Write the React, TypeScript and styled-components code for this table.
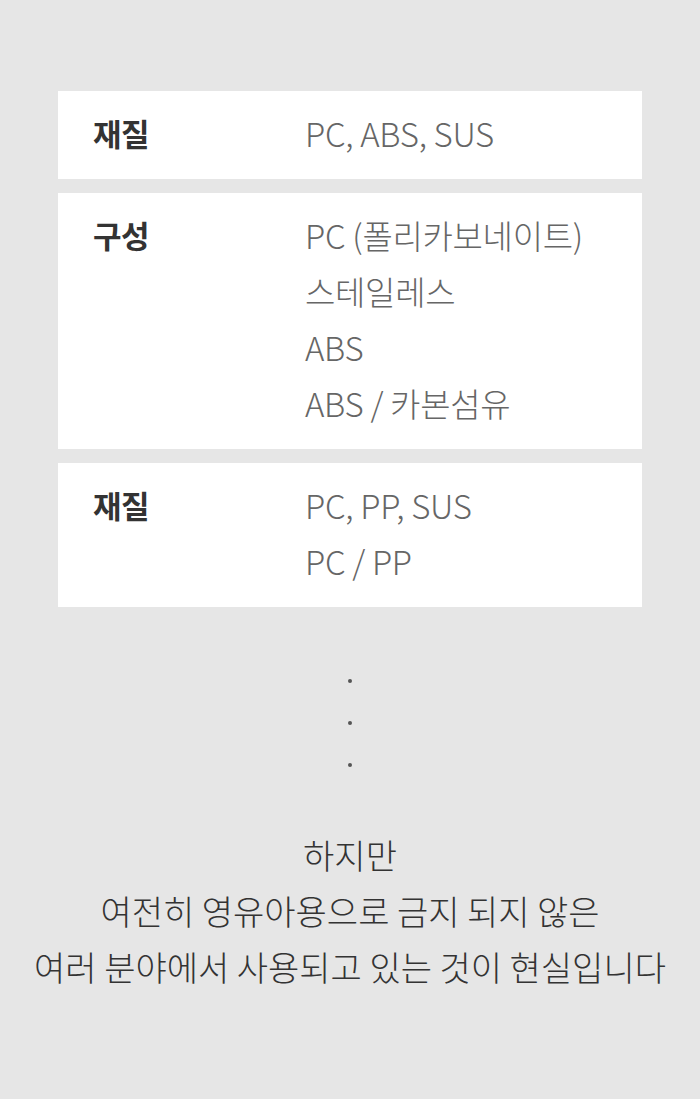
import styled, { createGlobalStyle } from 'styled-components';

const GlobalStyle = createGlobalStyle`
  html, body {
    margin: 0;
    padding: 0;
    background: #e6e6e6;
  }
  body {
    font-family: "Noto Sans CJK KR", "Noto Sans", sans-serif;
  }
`;

type SpecRow = {
  label: string;
  values: string[];
};

const specs: SpecRow[] = [
  { label: '재질', values: ['PC, ABS, SUS'] },
  { label: '구성', values: ['PC (폴리카보네이트)', '스테일레스', 'ABS', 'ABS / 카본섬유'] },
  { label: '재질', values: ['PC, PP, SUS', 'PC / PP'] },
];

const App = () => {
  return (
    <Page>
      <GlobalStyle />
      <SpecList>
        {specs.map((row, i) => (
          <SpecCard key={i}>
            <Label>{row.label}</Label>
            <Values>
              {row.values.map((v) => (
                <Value key={v}>{v}</Value>
              ))}
            </Values>
          </SpecCard>
        ))}
      </SpecList>

      <Dots>
        <Dot />
        <Dot />
        <Dot />
      </Dots>

      <Closing>
        하지만
        <br />
        여전히 영유아용으로 금지 되지 않은
        <br />
        여러 분야에서 사용되고 있는 것이 현실입니다
      </Closing>
    </Page>
  );
};

const Page = styled.div`
  width: 700px;
  height: 1099px;
  box-sizing: border-box;
  padding: 91px 58px 0;
  display: flex;
  flex-direction: column;
  align-items: center;
  background: #e6e6e6;
`;

const SpecList = styled.div`
  width: 100%;
  display: flex;
  flex-direction: column;
  gap: 14px;
`;

const SpecCard = styled.div`
  display: grid;
  grid-template-columns: 212px 1fr;
  padding: 14px 35px 18px;
  background: #ffffff;
`;

const Label = styled.span`
  font-size: 31px;
  font-weight: 700;
  line-height: 56px;
  letter-spacing: -0.5px;
  color: #333333;
`;

const Values = styled.div`
  display: flex;
  flex-direction: column;
`;

const Value = styled.span`
  font-size: 33px;
  font-weight: 300;
  line-height: 56px;
  letter-spacing: -0.3px;
  color: #666666;
`;

const Dots = styled.div`
  display: flex;
  flex-direction: column;
  align-items: center;
  gap: 38px;
  margin-top: 72px;
`;

const Dot = styled.span`
  width: 4px;
  height: 4px;
  border-radius: 50%;
  background: #555555;
`;

const Closing = styled.p`
  margin: 60px 0 0;
  font-size: 34px;
  font-weight: 300;
  line-height: 56px;
  letter-spacing: 0;
  text-align: center;
  color: #333333;
  white-space: nowrap;
`;

export default App;
